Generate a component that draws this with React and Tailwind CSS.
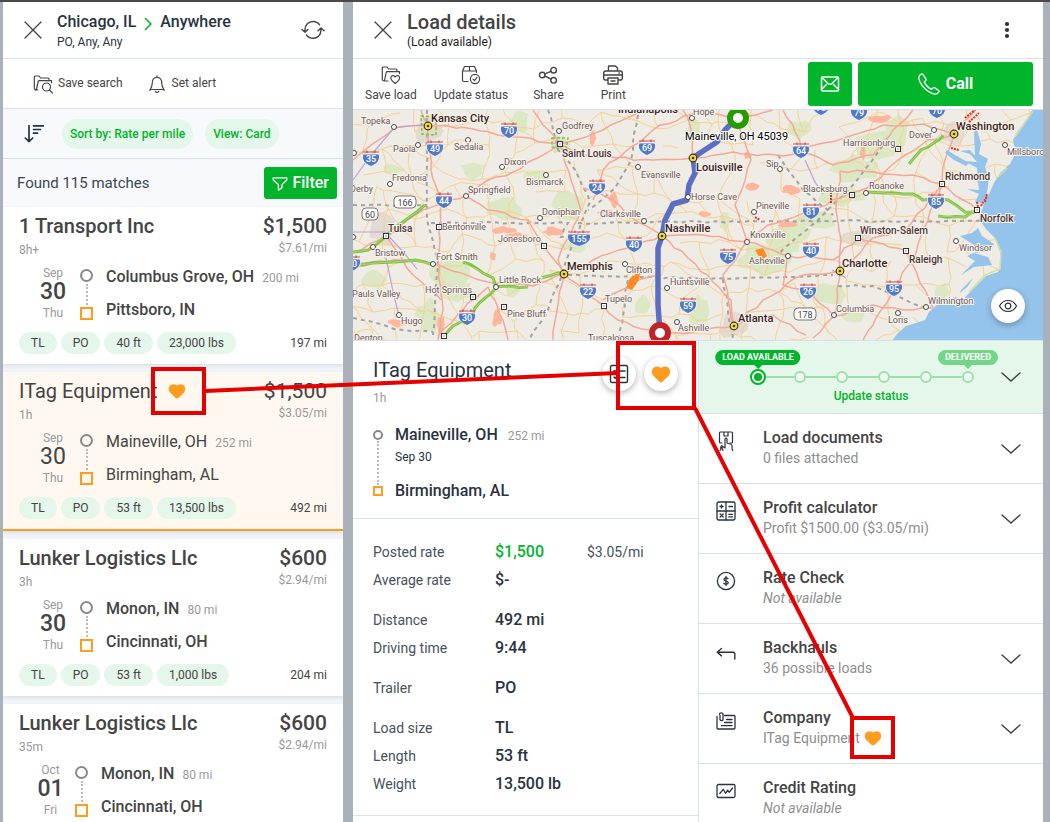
import { Heart } from "lucide-react";

const loads = [
  {
    id: 1, company: "1 Transport Inc", age: "8h+", price: "$1,500", perMile: "$7.61/mi",
    month: "Sep", day: "30", weekday: "Thu", dayWidth: "w-[28px]",
    from: "Columbus Grove, OH", deadhead: "200 mi", to: "Pittsboro, IN",
    tags: ["TL", "PO", "40 ft", "23,000 lbs"], distance: "197 mi",
  },
  {
    id: 2, company: "ITag Equipment", age: "1h", price: "$1,500", perMile: "$3.05/mi",
    month: "Sep", day: "30", weekday: "Thu", dayWidth: "w-[28px]", selected: true,
    from: "Maineville, OH", deadhead: "252 mi", to: "Birmingham, AL",
    tags: ["TL", "PO", "53 ft", "13,500 lbs"], distance: "492 mi",
  },
  {
    id: 3, company: "Lunker Logistics Llc", age: "3h", price: "$600", perMile: "$2.94/mi",
    month: "Sep", day: "30", weekday: "Thu", dayWidth: "w-[28px]",
    from: "Monon, IN", deadhead: "80 mi", to: "Cincinnati, OH",
    tags: ["TL", "PO", "53 ft", "1,000 lbs"], distance: "204 mi",
  },
  {
    id: 4, company: "Lunker Logistics Llc", age: "35m", price: "$600", perMile: "$2.94/mi",
    month: "Oct", day: "01", weekday: "Fri", dayWidth: "w-[23px]",
    from: "Monon, IN", deadhead: "80 mi", to: "Cincinnati, OH",
    tags: ["TL", "PO", "53 ft", "1,000 lbs"], distance: "204 mi",
  },
];

const rateGroups = [
  [["Posted rate", "$1,500", "$3.05/mi"], ["Average rate", "$-"]],
  [["Distance", "492 mi"], ["Driving time", "9:44"]],
  [["Trailer", "PO"]],
  [["Load size", "TL"], ["Length", "53 ft"], ["Weight", "13,500 lb"]],
];

/* ---------- icons ---------- */

function Icon({ size = 20, width = 1.2, className = "", children }) {
  return (
    <svg width={size} height={size} viewBox="0 0 20 20" fill="none" stroke="currentColor"
      strokeWidth={width} strokeLinecap="round" strokeLinejoin="round" className={`shrink-0 ${className}`} aria-hidden="true">
      {children}
    </svg>
  );
}

const CloseIcon = () => <Icon width={1.3}><path d="M2 2l16 16M18 2L2 18" /></Icon>;

const RefreshIcon = () => (
  <svg width="24" height="20" viewBox="0 0 24 20" fill="none" stroke="currentColor" strokeWidth="1.4" strokeLinecap="round" strokeLinejoin="round" aria-hidden="true">
    <path d="M4 12V9.500C4 5 7.500 1.500 12 1.500c3 0 5.200 1.200 6.600 3.400M1 9.500l3 2.800 3-2.800" />
    <path d="M20 8.500V10c0 4.800-3.500 8.300-8 8.300-3 0-5.200-1.200-6.600-3.400M17 10.800l3-2.800 3 2.800" />
  </svg>
);

const FolderSearchIcon = () => (
  <Icon>
    <path d="M5 16H3a2 2 0 0 1-1.700-2V3a1 1 0 0 1 1-1H6l1.500 2H15a1 1 0 0 1 1 1v1.500M3.500 15L5.200 7.500a1 1 0 0 1 1-.8H18.500v2M3.500 15L2 16" />
    <circle cx="13.500" cy="13" r="4" /><path d="M16.500 16l3 3.200" />
  </Icon>
);

const FolderHeartIcon = () => (
  <Icon>
    <path d="M7 16H3a2 2 0 0 1-1.700-2V3a1 1 0 0 1 1-1H6l1.500 2H15a1 1 0 0 1 1 1v1.500M3.500 15.500L5.200 7.500a1 1 0 0 1 1-.8H18.500v2" />
    <path d="M14.200 18.500c-2.600-2-4.400-3.500-4.400-5.500 0-2.600 3.200-3.200 4.400-1 1.200-2.200 4.400-1.600 4.400 1 0 2-1.800 3.500-4.400 5.500z" />
  </Icon>
);

const PackageCheckIcon = () => (
  <Icon>
    <path d="M7 16.500H3a1.500 1.500 0 0 1-1.500-1.500V6l2-4.500h10L15.500 6v1.500M1.500 6H15.500M8.500 1.500V6" />
    <circle cx="14" cy="14" r="4.600" /><path d="M12 14.200l1.500 1.500 2.500-3.300" />
  </Icon>
);

const ShareIcon = () => (
  <Icon width={1.4}>
    <circle cx="4.200" cy="10" r="2.800" /><circle cx="15.600" cy="5.200" r="2.800" /><circle cx="15.600" cy="15.300" r="2.800" />
    <path d="M6.800 8.900l6.200-2.600M6.800 11.200l6.200 2.800" />
  </Icon>
);

const PrintIcon = () => (
  <Icon width={1.400}>
    <path d="M5.500 6V1h7l2 2v3M4 15H2a1.500 1.500 0 0 1-1.300-1.500V8.500A2 2 0 0 1 2.700 6h14.600a2 2 0 0 1 2 2.500v5A1.500 1.500 0 0 1 18 15h-2M1 10h18M5 13h10v6H5zM8 16h4M16 8h.5" />
  </Icon>
);

const BellIcon = () => (
  <Icon>
    <path d="M10 3.300c-3.400 0-4.800 2.700-4.800 6 0 3-.9 4.700-2 6.200h13.600c-1.100-1.500-2-3.200-2-6.200 0-3.300-1.400-6-4.800-6zM10 3.300V1.800M8.200 17.200c.3 1.600 3.300 1.600 3.600 0M3 15.500v1M17 15.500v1" />
  </Icon>
);

const SortIcon = () => (
  <Icon width={1.700} className="text-[#28333f]"><path d="M5 1.500v16M1.300 14L5 17.700 8.700 14M9.500 1.800h10M9.500 5.500h7M9.500 9.200h4" /></Icon>
);

const FilterIcon = () => (
  <Icon size={16} width={1.600}><path d="M1.500 3.500h17v2.800L12.500 12v4L8 19v-7L1.500 6.300z" /></Icon>
);

const MailIcon = () => (
  <Icon width={1.500}><rect x="1.500" y="3" width="17" height="14" rx="1" /><path d="M2.500 4l5.500 5.500c1.200 1 2.800 1 4 0L17.500 4M2.500 14.500l4-4M17.500 14.500l-4-4" /></Icon>
);

const PhoneIcon = () => (
  <Icon size={22} width={1.200}>
    <path d="M2.300 1.300C.5 2.700.3 5 1.600 7.700c2.300 4.900 5.800 8.300 10.700 10.600 2.700 1.300 5 1.100 6.400-.7.500-.7.400-1.400-.2-1.900l-3.200-2.200c-.7-.5-1.400-.4-1.900.2l-1 1.200c-3-1.400-5.300-3.800-6.800-6.800l1.200-1c.6-.5.700-1.200.2-1.900L4.600 1.500c-.5-.7-1.500-.8-2.300-.2z" />
  </Icon>
);

const EyeIcon = () => (
  <Icon width={1.200} className="text-[#28333f]">
    <path d="M1.500 10c2-3.700 5-5.500 8.500-5.500s6.500 1.800 8.500 5.500c-2 3.700-5 5.500-8.500 5.500S3.500 13.700 1.500 10z" /><circle cx="10" cy="10" r="2.800" />
  </Icon>
);

const ChecklistIcon = () => (
  <Icon width={1.400}><rect x="1.500" y="1.500" width="17" height="17" rx="1.500" /><path d="M5 6.500l1.200 1.200L8.200 5.500M5 13l1.200 1.200 2-2.200M11 7h5M11 13.500h5" /></Icon>
);

const DocumentsIcon = () => (
  <Icon width={1.200}>
    <path d="M6 12H4.500a1 1 0 0 1-1-1V2a1 1 0 0 1 1-1h11a1 1 0 0 1 1 1v9a1 1 0 0 1-1 1H14M8 1v4h4V1" />
    <path d="M9 14V8c0-1.300 2-1.300 2 0v4l3.800 1.200c1 .3 1.300 1 1.300 2V18l.6 1.500M9 13v4L6.800 15.500l-1 1L7 19.500M6 14.500c-1 .5-1.500 1.500-1 3l-1 2" />
  </Icon>
);

const CalculatorIcon = () => (
  <Icon width={1.300}><rect x="1" y="1" width="18" height="18" rx="1.500" /><path d="M10 1v18M1 10h18M4 5.500h3M5.500 4v3M13 5.500h3.500M4.200 13l3 3M7.200 13l-3 3M12.800 13.300h3.700M12.800 15.900h3.700" /></Icon>
);

const DollarIcon = () => (
  <Icon width={1.300}><circle cx="10" cy="10" r="8.600" /><path d="M12 7.700c-.8-1.300-4-1.100-4 .7 0 2 4.200 1.200 4.200 3.300 0 1.800-3.400 2-4.400.5M10 5.500v9" /></Icon>
);

const BackIcon = () => <Icon width={1.400}><path d="M5.500 7.500L1.200 11.200l4.300 3.700M1.500 11.200h15.700c1 0 1.600.6 1.600 1.600V18" /></Icon>;

const CompanyIcon = () => (
  <Icon width={1.300}><path d="M8.500 4.500H18a1 1 0 0 1 1 1V17a1 1 0 0 1-1 1H2a1 1 0 0 1-1-1V5.500M4 4.500v4c0 1.500 3 1.500 3 0V3.300c0-2-3.500-2-3.500 0M10.500 8.500h5.500M8.500 11.500H16M5.500 14.700h10.500" /></Icon>
);

const CreditIcon = () => (
  <Icon width={1.300}><rect x="1" y="3.500" width="18" height="13" rx="1.500" /><path d="M3.800 12.500l3.500-4.200 2.200 4 2.200-3.200 1.500 2.200L16.500 7" /></Icon>
);

const Chevron = () => (
  <svg width="20" height="10" viewBox="0 0 20 10" fill="none" stroke="#444" strokeWidth="1.500" strokeLinecap="round" aria-hidden="true"><path d="M1 1l9 8 9-8" /></svg>
);

const OrangeHeart = ({ size }) => <Heart size={size} fill="#ff9c1e" stroke="#ff9c1e" aria-hidden="true" />;

const sections = [
  { title: "Load documents", sub: "0 files attached", icon: DocumentsIcon, open: true },
  { title: "Profit calculator", sub: "Profit $1500.00 ($3.05/mi)", icon: CalculatorIcon, open: true },
  { title: "Rate Check", sub: "Not available", icon: DollarIcon },
  { title: "Backhauls", sub: "36 possible loads", icon: BackIcon, open: true },
  { title: "Company", sub: "ITag Equipment", icon: CompanyIcon, open: true, favorite: true },
  { title: "Credit Rating", sub: "Not available", icon: CreditIcon },
];

/* ---------- search results ---------- */

function LoadCard({ load }) {
  const weight = load.selected ? "font-normal" : "font-medium";
  return (
    <li className={`px-4 pt-[7px] pb-[10px] text-[#444] shadow-[0_2px_4px_rgba(120,140,170,0.2)] ${load.selected ? "border-b-2 border-[#ff9c1e] bg-[#fff8f1]" : "bg-white"}`}>
      <div className="flex justify-between">
        <div>
          <h2 className={`flex items-center gap-[11px] text-xl leading-6 ${weight}`}>
            {load.company}
            {load.selected && <OrangeHeart size={18} />}
          </h2>
          <p className="mt-1 text-xs text-[#999]">{load.age}</p>
        </div>
        <div className="text-right">
          <p className={`text-[21px] leading-6 ${weight}`}>{load.price}</p>
          <p className="mt-[2px] text-xs text-[#999]">{load.perMile}</p>
        </div>
      </div>

      <div className="mt-[7px] flex pl-5">
        <div className={`flex flex-col items-center pt-px ${load.dayWidth}`}>
          <span className="text-xs leading-[14px] text-[#999]">{load.month}</span>
          <span className={`text-[23px] leading-6 ${weight}`}>{load.day}</span>
          <span className="mt-[2px] text-xs leading-[14px] text-[#999]">{load.weekday}</span>
        </div>
        <div className="mx-[13px] flex flex-col items-center pt-1 pb-[2px]">
          <span className="size-[13px] rounded-full border-2 border-[#888]" />
          <span className="my-[2px] flex-1 border-l-2 border-dotted border-[#bbb]" />
          <span className="size-[13px] border-2 border-[#ff9c1e]" />
        </div>
        <div className="flex flex-col gap-[9px]">
          <p className={`leading-6 ${weight}`}>
            {load.from} <span className="ml-1 text-xs font-normal text-[#999]">{load.deadhead}</span>
          </p>
          <p className={`leading-6 ${weight}`}>{load.to}</p>
        </div>
      </div>

      <div className="mt-[10px] flex items-center gap-1 text-xs">
        {load.tags.map((tag) => (
          <span key={tag} className="rounded-full bg-[#e5f6ea] px-3 leading-[22px]">{tag}</span>
        ))}
        <span className="ml-auto">{load.distance}</span>
      </div>
    </li>
  );
}

function SearchPanel() {
  return (
    <section className="min-w-0 overflow-hidden bg-[#f1f5f9] text-[#444]">
      <header className="flex h-[57px] items-center border-b border-[#d7e1ea] bg-white pr-[18px] pl-5">
        <button aria-label="Close search"><CloseIcon /></button>
        <div className="ml-[14px] flex-1 text-[#28333f]">
          <h1 className="flex items-center gap-2 leading-6 font-medium">
            Chicago, IL
            <svg width="8" height="14" viewBox="0 0 8 14" fill="none" stroke="#00b52a" strokeWidth="1.500" className="mt-1"><path d="M1 1l6 6-6 6" /></svg>
            Anywhere
          </h1>
          <p className="text-xs leading-4">PO, Any, Any</p>
        </div>
        <button aria-label="Refresh"><RefreshIcon /></button>
      </header>

      <div className="flex h-[50px] items-center gap-6 border-b border-[#d7e1ea] bg-white pl-[30px] text-xs">
        <button className="flex items-center gap-[5px]"><FolderSearchIcon /> <span className="pb-[2px]">Save search</span></button>
        <button className="flex items-center gap-[5px]"><BellIcon /> <span className="pb-[2px]">Set alert</span></button>
      </div>

      <div className="flex h-[50px] items-center gap-3 border-b border-[#d7e1ea] bg-[#f7f9fc] pl-[21px] text-xs font-medium text-[#00b52a]">
        <button aria-label="Sort order" className="mr-[6px]"><SortIcon /></button>
        <button className="h-[30px] rounded-full bg-[#e5f6ea] px-2">Sort by: Rate per mile</button>
        <button className="h-[30px] rounded-full bg-[#e5f6ea] px-2">View: Card</button>
      </div>

      <div className="flex h-12 items-center justify-between bg-[#f7f9fc] pr-[6px] pl-[14px]">
        <p className="text-[15px] text-[#3b4651]">Found 115 matches</p>
        <button className="flex h-8 items-center gap-1 rounded-[3px] bg-[#00b52a] px-2 font-medium text-white"><FilterIcon /> Filter</button>
      </div>

      <ul className="flex flex-col gap-2">
        {loads.map((load) => <LoadCard key={load.id} load={load} />)}
      </ul>
    </section>
  );
}

/* ---------- map ---------- */

// small deterministic generator so the road net is the same on every render
function seeded(seed) {
  let s = seed;
  return () => {
    s = (s * 16807) % 2147483647;
    return s / 2147483647;
  };
}

function wiggle(points, amount, rand) {
  let d = `M${points[0][0]} ${points[0][1]}`;
  for (let i = 1; i < points.length; i++) {
    const [x0, y0] = points[i - 1];
    const [x1, y1] = points[i];
    const n = Math.max(2, Math.round(Math.hypot(x1 - x0, y1 - y0) / 9));
    for (let k = 1; k < n; k++) {
      const x = x0 + ((x1 - x0) * k) / n + (rand() - 0.5) * amount;
      const y = y0 + ((y1 - y0) * k) / n + (rand() - 0.5) * amount;
      d += `L${x.toFixed(1)} ${y.toFixed(1)}`;
    }
    d += `L${x1} ${y1}`;
  }
  return d;
}

function minorRoads() {
  const rand = seeded(77);
  const step = 24;
  const cols = 30;
  const rows = 12;
  const grid = [];
  for (let r = 0; r < rows; r++) {
    grid.push([]);
    for (let c = 0; c < cols; c++) {
      grid[r].push([Math.round(c * step - 10 + (rand() - 0.5) * 20), Math.round(r * step - 12 + (rand() - 0.5) * 20)]);
    }
  }
  const paths = [];
  for (let r = 0; r < rows - 1; r++) {
    for (let c = 0; c < cols - 1; c++) {
      if (rand() < 0.68) paths.push(wiggle([grid[r][c], grid[r][c + 1]], 5, rand));
      if (rand() < 0.62) paths.push(wiggle([grid[r][c], grid[r + 1][c]], 5, rand));
      if (rand() < 0.15) paths.push(wiggle([grid[r][c], grid[r + 1][c + 1]], 5, rand));
    }
  }
  return paths.join("");
}

const highways = [
  [[75, 15], [120, 19], [160, 27], [205, 33]], [[75, 15], [78, 60], [88, 92], [85, 150], [90, 200], [85, 230]],
  [[0, 50], [41, 18], [75, 15], [68, 0]], [[207, 34], [160, 62], [135, 70], [113, 86], [91, 92], [70, 100], [33, 126], [0, 142]],
  [[207, 34], [250, 20], [290, 0]], [[207, 34], [235, 46], [300, 50], [340, 48]], [[207, 34], [218, 70], [228, 100], [205, 150], [211, 164]],
  [[211, 164], [240, 150], [275, 138], [309, 126], [350, 125], [395, 132], [435, 146]], [[211, 164], [235, 185], [265, 210], [307, 223]],
  [[80, 154], [50, 150], [0, 153]], [[80, 154], [135, 172], [180, 176], [211, 164]], [[135, 177], [110, 200], [85, 226]],
  [[207, 34], [190, 15], [180, 0]], [[340, 48], [338, 20], [330, 0]], [[340, 48], [380, 42], [430, 46], [448, 40], [480, 55], [520, 45]],
  [[309, 126], [285, 112], [260, 90], [230, 78]], [[309, 126], [335, 148], [360, 172], [378, 190], [381, 216]],
  [[384, 8], [398, 50], [382, 95], [394, 132], [370, 165], [381, 216]], [[384, 8], [420, 0]], [[384, 8], [350, 2]],
  [[394, 132], [415, 115], [458, 101], [495, 84], [514, 78], [545, 50], [575, 30], [601, 24]], [[435, 146], [480, 150], [505, 128], [553, 141], [572, 180], [580, 198]],
  [[487, 61], [483, 100], [488, 130], [487, 161], [481, 206], [460, 228]], [[381, 216], [410, 190], [450, 165], [487, 161], [520, 128], [553, 120], [589, 74]],
  [[601, 24], [592, 50], [589, 74], [575, 110], [560, 150], [541, 178], [520, 215], [510, 230]], [[589, 74], [610, 90], [624, 100]],
  [[481, 206], [520, 195], [560, 200], [580, 198]], [[381, 216], [420, 205], [453, 225]], [[381, 216], [340, 222], [307, 223]],
  [[448, 40], [440, 15], [430, 0]], [[520, 45], [540, 20], [560, 0]], [[601, 24], [570, 14], [530, 15], [500, 25], [448, 40]],
  [[601, 24], [622, 0]], [[211, 164], [205, 195], [200, 230]], [[33, 126], [60, 165], [88, 190]], [[135, 177], [150, 210], [155, 230]],
  [[211, 164], [190, 135], [175, 110], [135, 100], [113, 86]], [[434, 146], [430, 175], [455, 181], [481, 206]],
  [[346, 0], [300, 20], [250, 60], [240, 90]], [[487, 61], [520, 62], [560, 65], [589, 74]], [[305, 165], [280, 172], [250, 190]],
];

const greenRoads = [
  [[0, 142], [15, 140], [33, 126], [50, 112], [72, 95]], [[0, 155], [40, 152], [62, 150], [80, 155]],
  [[110, 152], [130, 163], [140, 168], [142, 177], [175, 177]], [[188, 168], [205, 163], [211, 164]],
  [[143, 178], [132, 188], [122, 198], [118, 207], [100, 216], [91, 226]], [[514, 82], [530, 83], [560, 84], [570, 90], [595, 90], [612, 102], [624, 101]],
  [[585, 106], [612, 107], [624, 101]], [[556, 54], [568, 40], [582, 32], [590, 25]],
];

const borders = [
  [[74, 0], [74, 110], [85, 150], [80, 225]], [[0, 95], [74, 95]], [[78, 113], [215, 113], [208, 127], [225, 127]],
  [[195, 0], [205, 40], [222, 60], [237, 92], [222, 130], [210, 160], [195, 200], [176, 230]], [[225, 113], [300, 112], [470, 111], [640, 111]],
  [[215, 165], [355, 169], [440, 167], [480, 165]], [[285, 5], [278, 50], [262, 78], [235, 100]], [[0, 208], [50, 220], [80, 222]],
  [[370, 169], [380, 230]], [[275, 170], [266, 230]], [[535, 30], [500, 75], [470, 105], [425, 145]], [[425, 45], [450, 80], [480, 105]],
  [[485, 176], [520, 176], [575, 200]],
];

const parks = [
  [120, 60, 14, 9], [150, 98, 22, 12], [185, 68, 18, 8], [215, 95, 16, 14], [95, 165, 24, 14], [105, 182, 22, 10], [20, 170, 12, 10], [165, 12, 10, 14],
  [410, 150, 32, 18], [430, 128, 28, 14], [460, 110, 24, 10], [500, 60, 26, 14], [525, 38, 22, 18], [490, 85, 26, 10], [545, 20, 12, 16], [372, 112, 6, 12],
  [345, 200, 10, 18], [590, 182, 8, 10], [622, 195, 6, 5], [480, 185, 18, 12], [75, 205, 12, 18], [340, 20, 8, 12], [220, 135, 12, 8], [290, 195, 8, 12],
  [445, 20, 14, 10], [160, 180, 10, 8], [500, 205, 12, 8], [40, 60, 10, 6],
];

const alerts = [[150, 120, 14, 4], [164, 127, 12, 4], [200, 122, 10, 5], [240, 28, 3, 10], [261, 90, 5, 9], [45, 213, 10, 4], [88, 215, 4, 9], [140, 146, 4, 4],
  [144, 208, 5, 10], [395, 45, 4, 4], [400, 77, 8, 4], [438, 80, 9, 5], [528, 9, 13, 4], [510, 42, 3, 8], [352, 104, 7, 3], [435, 114, 11, 3], [252, 102, 8, 3]];

const shields = [
  ["35", 18, 48], ["49", 82, 38], ["70", 156, 20], ["69", 294, 37], ["24", 244, 77], ["44", 91, 90], ["155", 226, 128], ["40", 281, 134], ["22", 235, 181],
  ["30", 114, 207], ["59", 335, 195], ["40", -1, 153], ["79", 506, 2], ["70", 584, 0], ["64", 448, 40], ["81", 458, 101], ["85", 583, 91], ["75", 375, 146],
  ["40", 458, 140], ["26", 455, 181], ["95", 541, 178], ["70", 468, -3],
];

const routes = [["166", 52, 92], ["60", 17, 104], ["178", 452, 204]];

// name, label x, label baseline, marker x, marker y, size class: city | town | village
const places = [
  ["Kansas City", 78, 12, 75, 16, "city"], ["Memphis", 214, 160, 211, 164, "city"], ["Nashville", 312, 122, 309, 126, "city"],
  ["Louisville", 343, 61, 340, 48, "city"], ["Washington", 603, 20, 601, 24, "city"], ["Charlotte", 489, 157, 487, 161, "city"],
  ["Atlanta", 385, 212, 381, 216, "city"], ["Indianapolis", 265, 3, 0, -20, "city"],
  ["Saint Louis", 209, 47, 207, 34, "town"], ["Tulsa", 35, 122, 33, 126, "town"], ["Richmond", 592, 70, 589, 74, "town"], ["Norfolk", 627, 112, 624, 100, "town"],
  ["Winston-Salem", 507, 124, 505, 128, "town"], ["Raleigh", 556, 153, 553, 141, "town"],
  ["Topeka", 8, 14, 41, 17, "village"], ["Paola", 40, 42, 65, 35, "village"], ["Sedalia", 101, 40, 115, 30, "village"], ["Godfrey", 209, 19, 206, 21, "village"],
  ["Dixon", 151, 55, 149, 57, "village"], ["Bismarck", 173, 75, 193, 65, "village"], ["Springfield", 115, 83, 113, 86, "village"],
  ["Fredonia", 39, 71, 37, 74, "village"], ["Derby", -3, 82, 1, 43, "village"], ["Evansville", 288, 68, 285, 57, "village"], ["Clarksville", 247, 107, 291, 111, "village"],
  ["Doniphan", 189, 105, 187, 108, "village"], ["Jonesboro", 145, 132, 191, 136, "village"], ["Bentonville", 89, 120, 86, 117, "village"],
  ["Bristow", 22, 146, 20, 137, "village"], ["Fort Smith", 83, 150, 80, 154, "village"], ["Little Rock", 146, 173, 143, 177, "village"],
  ["Hot Springs", 72, 183, 120, 187, "village"], ["Pine Bluff", 154, 207, 151, 197, "village"], ["Pauls Valley", -1, 187, 0, 127, "village"],
  ["Hugo", 48, 214, 46, 205, "village"], ["Denton", 1, 231, 91, 226, "village"], ["Tupelo", 252, 192, 251, 196, "village"], ["Clifton", 273, 163, 272, 154, "village"],
  ["Huntsville", 317, 175, 314, 178, "village"], ["Ashville", 325, 221, 324, 212, "village"], ["Tuscaloosa", 235, 231, 0, -20, "village"],
  ["Horse Cave", 338, 90, 335, 87, "village"], ["Hope", 340, 5, 339, 8, "village"], ["Sip", 413, 57, 427, 59, "village"], ["Harrisonburg", 490, 36, 545, 39, "village"], ["Dover", 556, 28, 581, 20, "village"],
  ["Blacksburg", 450, 82, 499, 85, "village"], ["Roanoke", 516, 79, 513, 83, "village"], ["Pineville", 403, 99, 401, 102, "village"],
  ["Knoxville", 397, 128, 394, 132, "village"], ["Asheville", 396, 154, 435, 146, "village"], ["Windsor", 606, 141, 603, 131, "village"],
  ["Columbia", 483, 202, 481, 205, "village"], ["Loris", 535, 213, 545, 203, "village"], ["Wilmington", 575, 194, 573, 197, "village"],
  ["Millsboro", 654, 45, 652, 35, "village"],
];

const squareMarkers = ["Saint Louis", "Tulsa", "Richmond", "Norfolk", "Winston-Salem", "Raleigh", "Jonesboro", "Bentonville", "Hot Springs", "Pine Bluff", "Denton", "Tupelo", "Harrisonburg", "Blacksburg"];

const labelStyle = {
  city: "fill-[#3a1d20] text-[11px] font-medium",
  town: "fill-[#4d3538] text-[10px] font-medium",
  village: "fill-[#6b5556] text-[9px]",
};

function PlaceMarker({ name, x, y, kind }) {
  if (kind === "city") {
    return <g><circle cx={x} cy={y} r="3.800" fill="#ffdf1c" stroke="#333" strokeWidth="1.200" /><circle cx={x} cy={y} r="1.300" fill="#333" /></g>;
  }
  if (squareMarkers.includes(name)) {
    return <g><rect x={x - 2.5} y={y - 2.5} width="5" height="5" fill="#fff" stroke="#333" /><rect x={x - 0.5} y={y - 0.5} width="1" height="1" fill="#333" /></g>;
  }
  return <circle cx={x} cy={y} r="2.500" fill="#fff" stroke="#444" />;
}

function RouteMap() {
  const rand = seeded(1234);
  const draw = (lines, amount) => lines.map((p) => wiggle(p, amount, rand)).join("");
  const blob = ([x, y, rx, ry]) =>
    Array.from({ length: 12 }, (_, i) => {
      const k = 0.6 + rand() * 0.6;
      const a = (i * Math.PI) / 6;
      return `${i ? "L" : "M"}${(x + Math.cos(a) * rx * k).toFixed(1)} ${(y + Math.sin(a) * ry * k).toFixed(1)}`;
    }).join("") + "Z";

  return (
    <svg viewBox="0 0 690 230" preserveAspectRatio="xMidYMid slice" className="block h-[230px] w-full bg-[#efece5]" role="img" aria-label="Route from Maineville, OH to Birmingham, AL">
      <path d={parks.map(blob).join("")} fill="#dbe8c3" />
      <path d={[[75, 20, 16, 14], [207, 34, 10, 10], [381, 214, 18, 14], [505, 128, 18, 8], [601, 24, 14, 12], [28, 120, 14, 16]].map(blob).join("")} fill="#e2dbd2" />
      <path d={minorRoads()} fill="none" stroke="#f6d291" strokeWidth="1" />
      <path d={alerts.map(blob).join("")} fill="#ffb195" fillOpacity=".9" />
      <path d={draw(borders, 2)} fill="none" stroke="#a3a3a3" strokeWidth="2" strokeDasharray="4 4" />
      <path d={draw(highways, 3)} fill="none" stroke="#f6a898" strokeWidth="1.500" />
      <path d="M0 70L18 45 41 18 75 14M0 122h32l20 22 12 15M33 148l8 38 5 20M452 50l10 22 8 12M666 24l14-24M479 160l14 8" fill="none" stroke="#bda0dc" strokeWidth="1.200" />
      <path d={draw(greenRoads, 2)} fill="none" stroke="#6bd030" strokeWidth="3" />
      <path d={draw(greenRoads, 1)} fill="none" stroke="#d8b89a" strokeWidth="1" />
      <path d="M68 6l15 1 0 18-14-1zM199 28l16 0-2 12-14-3z" fill="none" stroke="#6bd030" strokeDasharray="3 2" strokeWidth="1.500" />

      {/* Atlantic coast, Chesapeake Bay and the Carolina sounds */}
      <path fill="#94c4eb" d="M680 0l-10 14-6 8-4 8 3 12-6 12-10 9-6 10-4 9-5 9-3 9-3 9 7 10 9 9 5 14 1 14-3 6-12 4-8 8-9 9-6 7-7-3-8 3-10 4-9 8-4 8-9 3-10 3-9 8-5 7H690V0z" />
      <path fill="#94c4eb" d="M621 22l3-2 4 14-2 10 9 5-3 8 4 12-2 14-5 10-7-1 4-8-12-5 12 1-1-8-14-8 14 3-1-9-13-7 13 1-7-8-10-3 10-1 5 6zM594 40l8 5 14 8-3 3-12-6-9-7zM607 126l12-3 6-5 4 8 12 8-4 7-16 2 14 4 4 8-18 2-13 8 14-14-8-5 9-4-2-7zM607 183l8-7 5-8-12 12z" />
      <path d="M654 58l-9 9M642 128l6 14-1 17-15 6-16 17M680 1l-18 26" fill="none" stroke="#cfe3a0" strokeWidth="1.500" />
      <path d="M612 8l10-8M616 12l10-9M598 38l8 2M624 92l2 10M628 96l6-10M632 92l2-8M402 107l5 3M478 82v12" fill="none" stroke="#d9322d" strokeWidth="2" strokeDasharray="2 1" />
      <path d="M273 178l4-10 5-3-1-8 7-1-2 14-7 10zM402 140l8-2 4 8-6 4z" fill="#ff8a26" />

      {shields.map(([n, x, y]) => {
        const w = n.length > 2 ? 11 : 8;
        return (
          <g key={`${n}-${x}`} transform={`translate(${x} ${y})`}>
            <path d={`M${-w} -4C${-w - 2} 2 ${-w + 2} 6 0 8.500C${w - 2} 6 ${w + 2} 2 ${w} -4z`} fill="#5179c4" stroke="#fff" strokeWidth=".8" />
            <path d={`M${-w} -6H${w}M-4 -7.500V-5M4 -7.500V-5`} stroke="#d84a48" strokeWidth="1.200" />
            <text y="4" textAnchor="middle" fill="#fff" className="text-[9px] font-medium">{n}</text>
          </g>
        );
      })}
      {routes.map(([n, x, y]) => (
        <g key={n} transform={`translate(${x} ${y})`}>
          <rect x={n.length > 2 ? -11 : -8} y="-6" width={n.length > 2 ? 22 : 16} height="12" rx="4" fill="#fff" stroke="#777" />
          <text y="3.500" textAnchor="middle" fill="#444" className="text-[9px]">{n}</text>
        </g>
      ))}

      <path d="M307 223l-2-28v-30l0-27 4-12 3-16 8-16 14-4 2-15 6-12-2-15 7-5 17-11 8-12 12-12" fill="none" stroke="#5b6ec6" strokeWidth="5.500" strokeLinejoin="round" />

      {places.map(([name, lx, ly, mx, my, kind]) => (
        <g key={name}>
          <PlaceMarker name={name} x={mx} y={my} kind={kind} />
          <text x={lx} y={ly} className={labelStyle[kind]} stroke="#f7f4ee" strokeWidth="2" paintOrder="stroke">{name}</text>
        </g>
      ))}

      <circle cx="385" cy="8" r="8" fill="#fff" stroke="#259b00" strokeWidth="6" />
      <circle cx="307" cy="223" r="8" fill="#fff" stroke="#c0222a" strokeWidth="6" />
      <text x="332" y="30" className="fill-black text-[11px]" stroke="#fff" strokeWidth="2" paintOrder="stroke">Maineville, OH 45039</text>
    </svg>
  );
}

/* ---------- details ---------- */

function Toolbar() {
  const tools = [["Save load", FolderHeartIcon], ["Update status", PackageCheckIcon], ["Share", ShareIcon], ["Print", PrintIcon]];
  const gaps = ["", "ml-[17px]", "ml-[25px]", "ml-[37px]"];
  return (
    <div className="flex h-[51px] items-center border-b border-[#d7e1ea] pr-[10px] pl-3 text-xs">
      {tools.map(([label, ToolIcon], i) => (
        <button key={label} className={`flex flex-col items-center gap-[2px] ${gaps[i]}`}><ToolIcon /> {label}</button>
      ))}
      <button aria-label="Email" className="ml-auto flex size-11 items-center justify-center rounded-[3px] bg-[#00b52a] text-white"><MailIcon /></button>
      <button className="ml-[6px] flex h-11 w-[175px] items-center justify-center gap-[6px] rounded-[3px] bg-[#00b52a] text-base font-bold text-white"><PhoneIcon /> Call</button>
    </div>
  );
}

function StatusTracker() {
  return (
    <div className="flex h-[73px] border-b border-[#d7e1ea] bg-[#e5f6ea] pr-[22px] pl-[38px]">
      <div className="flex-1 pt-[27px] text-center">
        <div className="grid grid-cols-6">
          {[0, 1, 2, 3, 4, 5].map((i) => (
            <div key={i} className="relative flex h-[18px] items-center">
              <span className={`h-[2px] flex-1 ${i === 0 ? "" : "bg-[#9ee0ac]"}`} />
              {i === 0 ? (
                <span className="flex size-4 items-center justify-center rounded-full border-2 border-[#00b52a] bg-white"><span className="size-2 rounded-full bg-[#00b52a]" /></span>
              ) : (
                <span className="size-3 rounded-full border-2 border-[#9ee0ac] bg-[#effaf2]" />
              )}
              <span className={`h-[2px] flex-1 ${i === 5 ? "" : "bg-[#9ee0ac]"}`} />
              {i === 0 && <Badge color="bg-[#00b52a]" tip="border-t-[#00b52a]">LOAD AVAILABLE</Badge>}
              {i === 5 && <Badge color="bg-[#74d688]" tip="border-t-[#74d688]">DELIVERED</Badge>}
            </div>
          ))}
        </div>
        <button className="block w-full pl-4 text-xs leading-5 font-medium text-[#00b52a]">Update status</button>
      </div>
      <button aria-label="Expand status" className="ml-3 flex"><span className="mt-[31px]"><Chevron /></span></button>
    </div>
  );
}

function Badge({ color, tip, children }) {
  return (
    <span className={`absolute bottom-[21px] left-1/2 -translate-x-1/2 rounded-full px-[7px] text-[9px] leading-[15px] font-bold whitespace-nowrap text-white ${color}`}>
      {children}
      <span className={`absolute top-full left-1/2 -ml-1 border-x-4 border-t-4 border-x-transparent ${tip}`} />
    </span>
  );
}

function RoundButton({ label, children }) {
  return (
    <button aria-label={label} className="flex size-[34px] items-center justify-center rounded-full bg-white shadow-[0_2px_6px_rgba(0,0,0,0.3)]">
      {children}
    </button>
  );
}

function Summary() {
  return (
    <div className="text-[#28333f]">
      <div className="border-b border-[#d7e1ea] px-5 pb-[15px]">
        <div className="flex items-start justify-between pt-4">
          <div>
            <h2 className="text-xl leading-[26px]">ITag Equipment</h2>
            <p className="mt-[7px] text-xs text-[#999]">1h</p>
          </div>
          <div className="flex gap-2">
            <RoundButton label="Notes"><ChecklistIcon /></RoundButton>
            <RoundButton label="Favorite"><OrangeHeart size={20} /></RoundButton>
          </div>
        </div>

        <div className="mt-[17px] flex gap-3">
          <div className="flex flex-col items-center py-[7px]">
            <span className="size-[10px] rounded-full border-2 border-[#888]" />
            <span className="my-px flex-1 border-l-2 border-dotted border-[#bbb]" />
            <span className="size-[10px] border-2 border-[#ff9c1e]" />
          </div>
          <div>
            <p className="leading-6 font-medium">Maineville, OH <span className="ml-[6px] text-xs font-normal text-[#999]">252 mi</span></p>
            <p className="text-xs leading-5">Sep 30</p>
            <p className="mt-3 leading-6 font-medium">Birmingham, AL</p>
          </div>
        </div>
      </div>

      <table className="w-full border-b border-[#d7e1ea]">
        {rateGroups.map((rows, g) => (
          <tbody key={g}>
            <tr className={g === 0 ? "h-[19px]" : "h-3"}><td colSpan="3" /></tr>
            {rows.map(([label, value, extra]) => (
              <tr key={label} className="h-7">
                <th scope="row" className="w-[142px] py-0 pl-5 text-left text-sm leading-5 font-normal text-[#46515c]">{label}</th>
                <td className={`w-[92px] p-0 leading-6 font-medium ${extra ? "text-[#00b52a]" : ""}`}>{value}</td>
                <td className="p-0 text-sm text-[#46515c]">{extra}</td>
              </tr>
            ))}
          </tbody>
        ))}
        <tfoot><tr className="h-[17px]"><td colSpan="3" /></tr></tfoot>
      </table>
    </div>
  );
}

function DetailsPanel() {
  return (
    <section className="min-w-0 overflow-hidden bg-white text-[#444]">
      <header className="flex h-[57px] items-center border-b border-[#d7e1ea] pr-[26px] pl-5">
        <button aria-label="Close details"><CloseIcon /></button>
        <div className="ml-[14px] flex-1">
          <h1 className="text-xl leading-6 font-medium">Load details</h1>
          <p className="text-xs leading-4 text-[#222]">(Load available)</p>
        </div>
        <button aria-label="More">
          <svg width="20" height="20" viewBox="0 0 20 20" fill="#28333f"><circle cx="10" cy="4" r="2.100" /><circle cx="10" cy="10" r="2.100" /><circle cx="10" cy="16" r="2.100" /></svg>
        </button>
      </header>

      <Toolbar />

      <div className="relative">
        <RouteMap />
        <div className="absolute right-[18px] bottom-[17px]">
          <RoundButton label="Toggle map"><EyeIcon /></RoundButton>
        </div>
      </div>

      <div className="grid min-h-screen grid-cols-2 border-t border-[#d7e1ea]">
        <Summary />
        <div className="border-l border-[#d7e1ea]">
          <StatusTracker />
          {sections.map(({ title, sub, icon: SectionIcon, open, favorite }) => (
            <div key={title} className="flex h-[70px] border-b border-[#d7e1ea] pr-[22px] pl-[17px]">
              <span className="mt-[17px] text-[#28333f]"><SectionIcon /></span>
              <div className="ml-[27px] flex-1 pt-[13px]">
                <h3 className="leading-[22px] font-medium">{title}</h3>
                <p className={`flex items-center gap-1 text-sm leading-[18px] text-[#8e8e8e] ${sub === "Not available" ? "italic" : ""}`}>
                  {sub}
                  {favorite && <OrangeHeart size={18} />}
                </p>
              </div>
              {open && <button aria-label={`Expand ${title}`}><Chevron /></button>}
            </div>
          ))}
        </div>
      </div>
    </section>
  );
}

// red boxes and the lines that tie the favorite hearts together
function Callouts() {
  return (
    <svg className="pointer-events-none absolute inset-0 h-full w-full" fill="none" stroke="#e60000" strokeWidth="4" aria-hidden="true">
      <rect x="153" y="367" width="51" height="44" />
      <rect x="618" y="341" width="76" height="65" />
      <rect x="852" y="716" width="41" height="39" />
      <path d="M205 389L618 371M695 406L853 716" />
    </svg>
  );
}

export default function App() {
  return (
    <main className="relative grid h-screen grid-cols-[34fr_69fr] gap-[10px] overflow-hidden border-t-2 border-[#4a4849] bg-[#a9b1b9] pr-[7px] pl-[3px] font-[Roboto,sans-serif]">
      <SearchPanel />
      <DetailsPanel />
      <Callouts />
    </main>
  );
}
